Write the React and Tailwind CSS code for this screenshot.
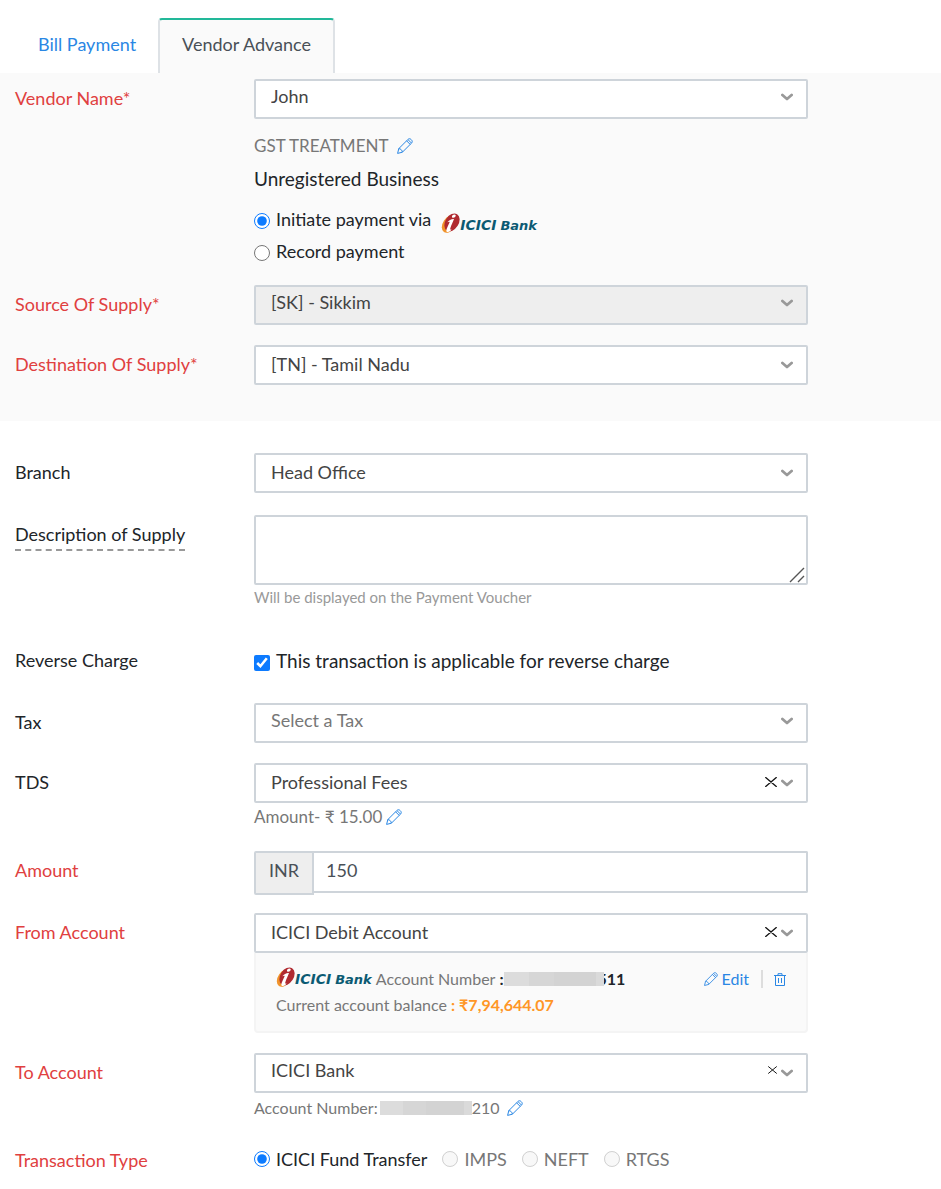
import React, { useState } from 'react';

const SUPPLY_STATES = ['[SK] - Sikkim', '[TN] - Tamil Nadu'];

const TRANSACTION_TYPES = [
  { id: 'fund', label: 'ICICI Fund Transfer', disabled: false },
  { id: 'imps', label: 'IMPS', disabled: true },
  { id: 'neft', label: 'NEFT', disabled: true },
  { id: 'rtgs', label: 'RTGS', disabled: true },
];

function PencilIcon({ className = 'size-4' }) {
  return (
    <svg viewBox="0 0 16 16" className={className} fill="none" stroke="currentColor" strokeWidth="1" strokeLinejoin="round" aria-hidden="true">
      <path d="M0.6 15.4 1.8 10.6 10.8 1.6C11.8 0.6 12.9 0.3 14.2 1.6 15.6 3 15.5 4.1 14.4 5.2L5.4 14.2Z" />
      <path d="M1.8 10.6C3.6 10.6 5.3 12.3 5.4 14.2M9.6 2.8 13.2 6.4M11 1.6 14.4 5" />
    </svg>
  );
}

function TrashIcon() {
  return (
    <svg viewBox="0 0 12 13" className="h-[13px] w-3" fill="none" stroke="currentColor" aria-hidden="true">
      <path d="M0 2.5H12M4 2.5V0.7H8V2.5M1.5 2.5V12.5H10.5V2.5" />
      <path d="M4.5 5V10M7.5 5V10" />
    </svg>
  );
}

function ChevronIcon() {
  return (
    <svg viewBox="0 0 12 8" className="h-2 w-3" fill="none" stroke="#999999" strokeWidth="2.7" strokeLinecap="round" strokeLinejoin="round" aria-hidden="true">
      <path d="M1.4 2 6 6 10.6 2" />
    </svg>
  );
}

function ClearIcon({ small }) {
  return (
    <svg viewBox="0 0 12 10" className={small ? 'h-2 w-[9px]' : 'h-[10px] w-3'} fill="none" stroke="#111111" strokeWidth="1.3" strokeLinecap="round" aria-hidden="true">
      <path d="M0.7 0.6 11.3 9.4M11.3 0.6 0.7 9.4" />
    </svg>
  );
}

function IciciLogo({ className = '' }) {
  return (
    <span className={`inline-flex items-end font-['DejaVu_Sans',sans-serif] text-sm leading-[15px] font-bold text-[#0b5a73] italic ${className}`}>
      <svg viewBox="0 0 57 60" className="h-5 w-[19px]" aria-hidden="true">
        <ellipse cx="25" cy="33" rx="19" ry="29" transform="rotate(34 25 33)" fill="#f0932b" />
        <ellipse cx="33" cy="28" rx="20" ry="29" transform="rotate(32 33 28)" fill="#b02a30" />
        <path d="M38 5C43 4 46 7 43 11 40 15 34 16 33 12 32 9 34 6 38 5Z" fill="#ffffff" />
        <path d="M19 28C24 21 32 17 39 18 36 26 30 38 28 46 27 50 29 51 32 49 28 56 21 59 17 56 13 52 23 36 26 27 24 25 22 26 19 28Z" fill="#ffffff" />
      </svg>
      <span>ICICI</span>
      <span className="ml-1 text-[13px] leading-[15px]">Bank</span>
    </span>
  );
}

// Grey strip that hides the leading digits of an account number
function MaskedDigits({ className }) {
  return (
    <span className={`relative inline-flex h-[14px] ${className}`} aria-hidden="true">
      <span className="w-1/4 bg-[#dcdcdc]" />
      <span className="w-1/4 bg-[#d6d6d6]" />
      <span className="flex-1 bg-[#d3d3d3]" />
      <span className="w-2 bg-[#dadada]" />
    </span>
  );
}

function FormRow({ label, htmlFor, required, hint, className = '', children }) {
  const color = required ? 'text-[#e04040]' : 'text-[#212529]';
  const Tag = htmlFor ? 'label' : 'div';
  return (
    <div className={`flex pr-4 pl-[15px] ${className}`}>
      <div className="w-[239px] shrink-0">
        <Tag htmlFor={htmlFor} className={`inline-block leading-[38px] ${color}`}>
          {hint ? (
            <span className="border-b-2 border-dashed border-[#999999] pb-1">{label}</span>
          ) : (
            label
          )}
        </Tag>
      </div>
      <div className="w-full max-w-[554px] min-w-0">{children}</div>
    </div>
  );
}

function SelectField({ id, options, value, disabled, raised, muted, clear }) {
  const [current, setCurrent] = useState(value);
  return (
    <div className="relative">
      <select
        id={id}
        value={current}
        disabled={disabled}
        onChange={(e) => setCurrent(e.target.value)}
        className={`block h-10 w-full appearance-none rounded-xs border-2 border-[#ced4da] pr-14 pl-[15px] opacity-100 outline-none ${
          raised ? 'pb-1.5' : 'pb-0.5'
        } ${disabled ? 'bg-[#eeeeee]' : 'bg-white'} ${muted ? 'text-[#777777]' : 'text-[#444444]'}`}
      >
        {options.map((option) => (
          <option key={option}>{option}</option>
        ))}
      </select>
      <div className={`pointer-events-none absolute inset-y-0 right-[15px] flex items-center gap-1 ${raised && !clear ? 'pb-1' : ''}`}>
        {clear && (
          <button
            type="button"
            aria-label="Clear selection"
            className={`pointer-events-auto ${clear === 'small' ? 'pb-1.5' : 'pb-0.5'}`}
          >
            <ClearIcon small={clear === 'small'} />
          </button>
        )}
        <ChevronIcon />
      </div>
    </div>
  );
}

export default function App() {
  const [method, setMethod] = useState('initiate');
  const [reverseCharge, setReverseCharge] = useState(true);
  const [amount, setAmount] = useState('150');
  const [transactionType, setTransactionType] = useState('fund');

  return (
    <div className="min-h-screen bg-white pb-2 font-[Lato,'Noto_Sans',sans-serif] text-lg leading-6 text-[#212529]">
      {/* Tabs */}
      <nav className="flex h-[73px] items-stretch pt-[18px] pl-4">
        <a href="#bill-payment" className="flex items-center border-t-2 border-transparent px-[22px] pb-1.5 text-[#2a87e4]">
          Bill Payment
        </a>
        <a
          href="#vendor-advance"
          aria-current="page"
          className="flex items-center rounded-t-sm border-x-2 border-t-2 border-x-[#dee2e6] border-t-[#22b899] bg-[#fafafa] px-[22px] pb-1.5 text-[#495057]"
        >
          Vendor Advance
        </a>
      </nav>

      <form>
        {/* Vendor and supply details */}
        <section className="flex flex-col gap-5 bg-[#fafafa] pt-1.5 pb-9">
          <FormRow label="Vendor Name*" htmlFor="vendor" required className="pb-0.5">
            <SelectField id="vendor" value="John" options={['John']} raised />
            <div className="mt-[15px] flex items-center gap-2 text-[17px] leading-6 text-[#777777]">
              GST TREATMENT
              <button type="button" aria-label="Edit GST treatment" className="text-[#2a87e4]">
                <PencilIcon />
              </button>
            </div>
            <p className="mt-[9px] text-[19px] leading-6">Unregistered Business</p>
            <div className="mt-4 flex flex-col gap-2">
              <label className="flex h-6 items-center gap-1.5">
                <input
                  type="radio"
                  name="method"
                  className="mt-1 size-4 accent-[#0d7bff]"
                  checked={method === 'initiate'}
                  onChange={() => setMethod('initiate')}
                />
                Initiate payment via
                <IciciLogo className="ml-1 pt-2" />
              </label>
              <label className="flex h-6 items-center gap-1.5">
                <input
                  type="radio"
                  name="method"
                  className="mt-1 size-4 accent-[#0d7bff]"
                  checked={method === 'record'}
                  onChange={() => setMethod('record')}
                />
                Record payment
              </label>
            </div>
          </FormRow>
          <FormRow label="Source Of Supply*" htmlFor="source" required>
            <SelectField id="source" value="[SK] - Sikkim" options={SUPPLY_STATES} disabled raised />
          </FormRow>
          <FormRow label="Destination Of Supply*" htmlFor="destination" required>
            <SelectField id="destination" value="[TN] - Tamil Nadu" options={SUPPLY_STATES} />
          </FormRow>
        </section>

        {/* Payment details */}
        <section className="pt-8">
          <FormRow label="Branch" htmlFor="branch">
            <SelectField id="branch" value="Head Office" options={['Head Office']} />
          </FormRow>

          <FormRow label="Description of Supply" htmlFor="description" hint className="mt-[22px]">
            <div className="relative">
              <textarea
                id="description"
                className="block h-[70px] w-full resize-none rounded-xs border-2 border-[#ced4da] bg-white px-[15px] py-2 outline-none"
              />
              <svg viewBox="0 0 16 16" className="pointer-events-none absolute right-[3px] bottom-[2px] size-4" stroke="#555555" strokeWidth="1.4" aria-hidden="true">
                <path d="M1 15 15 1M9 15 15 9" />
              </svg>
            </div>
            <p className="text-[15px] leading-6 text-[#999999]">Will be displayed on the Payment Voucher</p>
          </FormRow>

          <FormRow label="Reverse Charge" className="mt-8">
            <label className="flex h-10 items-center gap-1.5 text-[19px]">
              <input
                type="checkbox"
                className="mt-1 size-4 accent-[#0d7bff]"
                checked={reverseCharge}
                onChange={(e) => setReverseCharge(e.target.checked)}
              />
              This transaction is applicable for reverse charge
            </label>
          </FormRow>

          <FormRow label="Tax" htmlFor="tax" className="mt-[22px]">
            <SelectField id="tax" value="Select a Tax" options={['Select a Tax']} raised muted />
          </FormRow>

          <FormRow label="TDS" htmlFor="tds" className="mt-5">
            <SelectField id="tds" value="Professional Fees" options={['Professional Fees']} clear="large" />
            <div className="mt-0.5 flex items-center gap-1 text-[17px] leading-6 text-[#777777]">
              Amount- ₹ 15.00
              <button type="button" aria-label="Edit TDS amount" className="text-[#2a87e4]">
                <PencilIcon />
              </button>
            </div>
          </FormRow>

          <FormRow label="Amount" htmlFor="amount" required className="mt-[22px]">
            <div className="flex items-start text-[#495057]">
              <span className="flex h-11 w-[60px] items-center justify-center rounded-l-xs border-2 border-[#ced4da] bg-[#eeeeee] pb-1.5">
                INR
              </span>
              <input
                id="amount"
                type="text"
                value={amount}
                onChange={(e) => setAmount(e.target.value)}
                className="h-[42px] min-w-0 flex-1 rounded-r-xs border-2 border-l-0 border-[#ced4da] bg-white px-3 pb-1 outline-none"
              />
            </div>
          </FormRow>

          <FormRow label="From Account" htmlFor="from-account" required className="mt-[18px]">
            <SelectField id="from-account" value="ICICI Debit Account" options={['ICICI Debit Account']} clear="large" />
            <div className="flex h-20 items-start justify-between rounded-b-sm border-2 border-t-0 border-[#f4f4f4] bg-[#fafafa] px-5 pt-3 text-base text-[#777777]">
              <div>
                <div className="flex h-7 items-center">
                  <IciciLogo className="pb-1" />
                  <span className="ml-1">Account Number</span>
                  <span className="ml-1 font-bold text-[#212529]">:</span>
                  <MaskedDigits className="-mr-1.5 w-[100px]" />
                  <span className="font-bold text-[#212529]">511</span>
                </div>
                <div>
                  Current account balance <span className="font-bold text-[#ff9626]">: ₹7,94,644.07</span>
                </div>
              </div>
              <div className="flex h-7 items-center text-[#2a87e4]">
                <button type="button" className="flex items-center gap-1">
                  <PencilIcon className="size-3.5" />
                  Edit
                </button>
                <span className="ml-3 h-[18px] w-0.5 bg-[#dddddd]" />
                <button type="button" aria-label="Delete account" className="ml-[11px]">
                  <TrashIcon />
                </button>
              </div>
            </div>
          </FormRow>

          <FormRow label="To Account" htmlFor="to-account" required className="mt-5">
            <SelectField id="to-account" value="ICICI Bank" options={['ICICI Bank']} raised clear="small" />
            <div className="mt-[3px] flex items-center text-base leading-6 text-[#777777]">
              Account Number:
              <MaskedDigits className="ml-0.5 w-[92px]" />
              210
              <button type="button" aria-label="Edit account number" className="ml-2 text-[#2a87e4]">
                <PencilIcon />
              </button>
            </div>
          </FormRow>

          <FormRow label="Transaction Type" required className="mt-[21px]">
            <div className="flex h-9 items-center gap-[15px]" role="radiogroup" aria-label="Transaction Type">
              {TRANSACTION_TYPES.map((type) => (
                <label key={type.id} className={`flex items-center gap-1.5 ${type.disabled ? 'text-[#777777]' : ''}`}>
                  <input
                    type="radio"
                    name="transaction-type"
                    className="size-4 accent-[#0d7bff]"
                    disabled={type.disabled}
                    checked={transactionType === type.id}
                    onChange={() => setTransactionType(type.id)}
                  />
                  {type.label}
                </label>
              ))}
            </div>
          </FormRow>
        </section>
      </form>
    </div>
  );
}
